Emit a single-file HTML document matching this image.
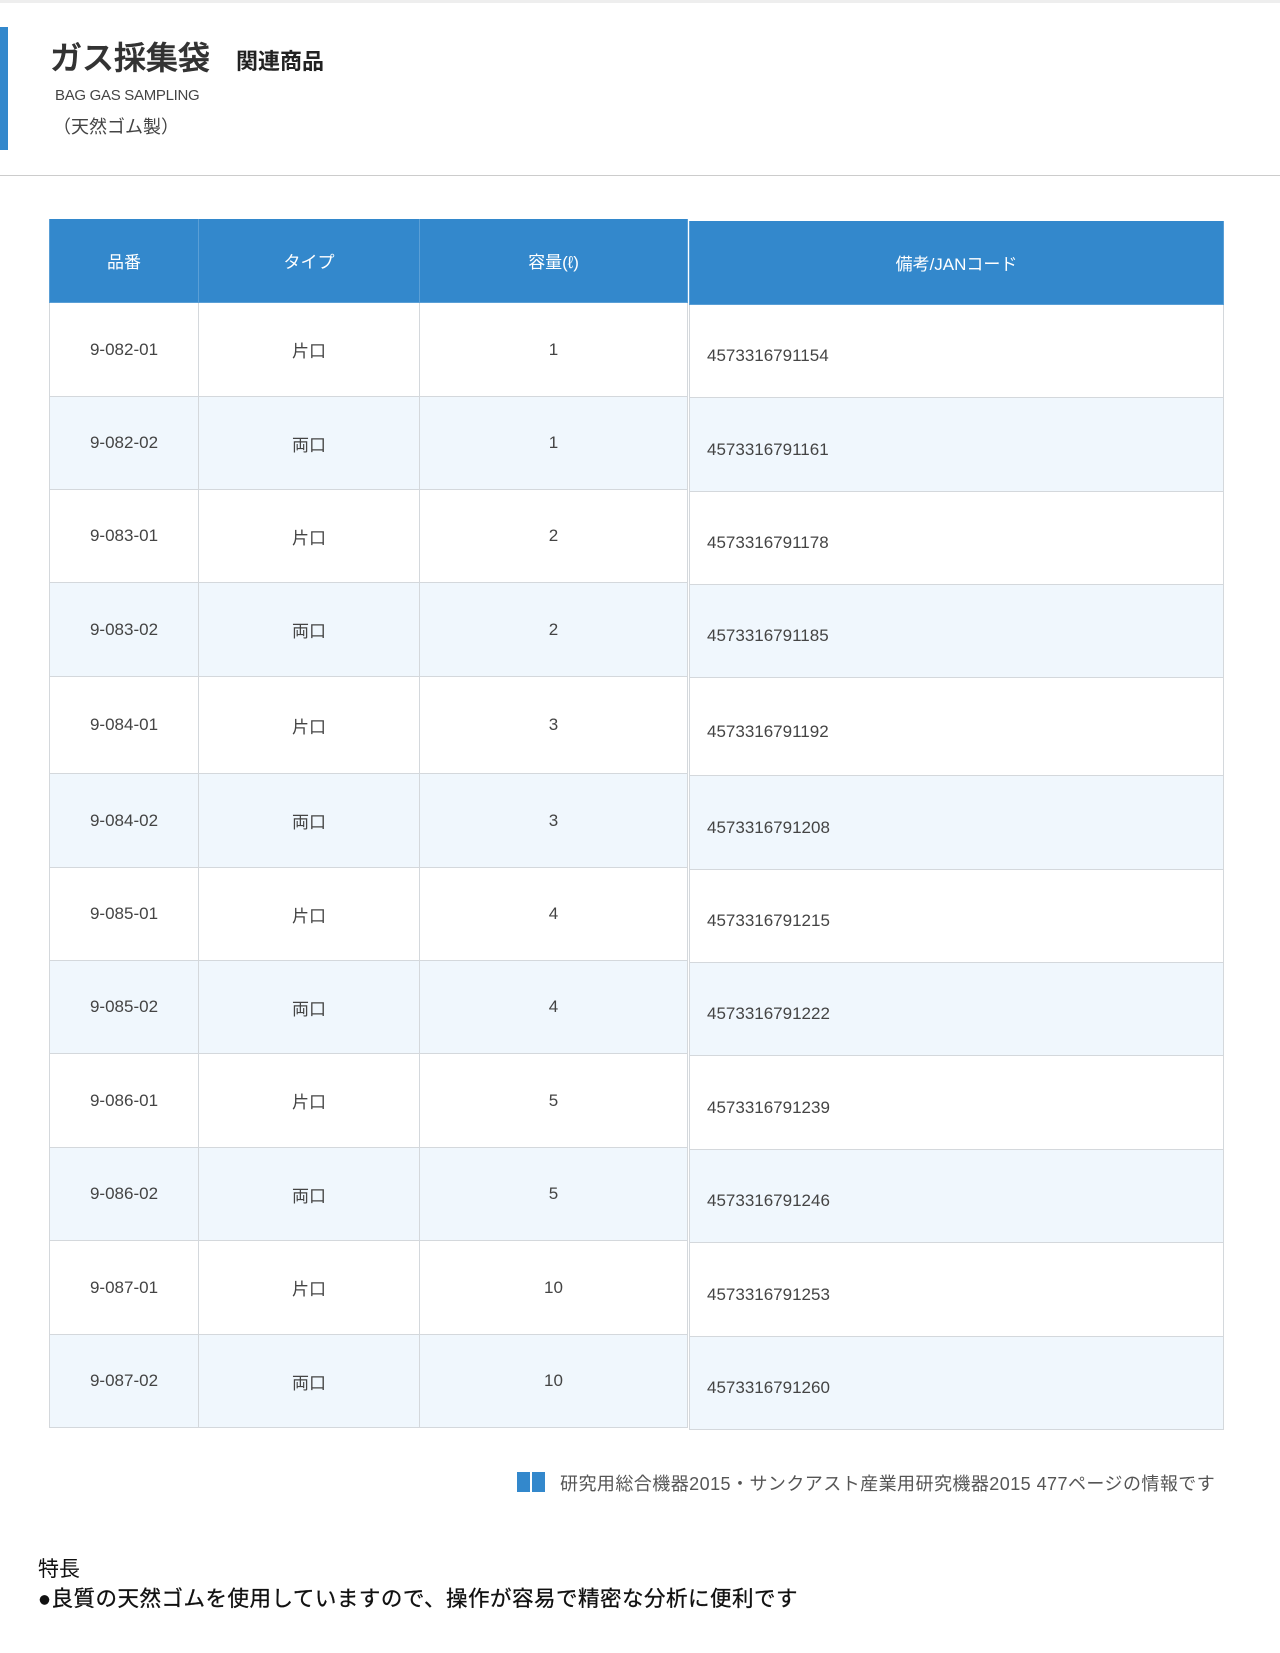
<!DOCTYPE html>
<html><head><meta charset="utf-8"><style>
*{margin:0;padding:0;box-sizing:border-box}
body{width:1280px;height:1653px;background:#fff;position:relative;font-family:"Liberation Sans","Noto Sans CJK JP",sans-serif;color:#333;overflow:hidden}
.a{position:absolute}
.c{position:absolute;display:flex;align-items:center;justify-content:center;font-size:17px;color:#444;border-right:1px solid #d4d8dc;border-bottom:1px solid #d4d8dc}
.h{background:#3388cc;color:#fff;border-color:#5a9fd6;font-size:17px}
</style></head><body>
<div class="a" style="left:0;top:0;width:1280px;height:3px;background:#eee"></div>
<div class="a" style="left:0;top:27px;width:8px;height:123px;background:#3388cc"></div>
<div class="a" style="left:50px;top:33px;font-size:32px;font-weight:500;color:#333;white-space:nowrap;-webkit-text-stroke:0.6px #333">ガス採集袋</div>
<div class="a" style="left:236px;top:44px;font-size:22px;font-weight:bold;color:#222;white-space:nowrap">関連商品</div>
<div class="a" style="left:55px;top:87px;font-size:15px;color:#444;letter-spacing:-0.3px">BAG GAS SAMPLING</div>
<div class="a" style="left:53px;top:113px;font-size:18px;color:#444">（天然ゴム製）</div>
<div class="a" style="left:0;top:175px;width:1280px;height:1px;background:#ccc"></div>

<div id="t"></div>
<div class="a" style="left:517px;top:1472px;width:13px;height:20px;background:#3388cc"></div>
<div class="a" style="left:532px;top:1472px;width:13px;height:20px;background:#3388cc"></div>
<div class="a" style="left:560px;top:1470px;font-size:18px;letter-spacing:0.45px;color:#555;white-space:nowrap">研究用総合機器2015・サンクアスト産業用研究機器2015 477ページの情報です</div>
<div class="a" style="left:38px;top:1553px;font-size:21px;color:#111">特長</div>
<div class="a" style="left:38px;top:1582px;font-size:21.5px;letter-spacing:0.5px;color:#111;white-space:nowrap;-webkit-text-stroke:0.3px #111">●良質の天然ゴムを使用していますので、操作が容易で精密な分析に便利です</div>
<script>
var L=[219,303,397,490,583,677,774,868,961,1054,1148,1241,1335,1428];
var R=[221,305,398,492,585,678,776,870,963,1056,1150,1243,1337,1430];
var rows=[["9-082-01","片口",1,"4573316791154"],["9-082-02","両口",1,"4573316791161"],["9-083-01","片口",2,"4573316791178"],["9-083-02","両口",2,"4573316791185"],["9-084-01","片口",3,"4573316791192"],["9-084-02","両口",3,"4573316791208"],["9-085-01","片口",4,"4573316791215"],["9-085-02","両口",4,"4573316791222"],["9-086-01","片口",5,"4573316791239"],["9-086-02","両口",5,"4573316791246"],["9-087-01","片口",10,"4573316791253"],["9-087-02","両口",10,"4573316791260"]];
var cx=[49,199,420,688],h="";
function cell(x,y,w,ht,txt,cls,bg,extra){return '<div class="c '+cls+'" style="left:'+x+'px;top:'+y+'px;width:'+w+'px;height:'+ht+'px;background:'+bg+';'+(extra||'')+'">'+txt+'</div>';}
var hd=["品番","タイプ","容量(ℓ)"];
for(var j=0;j<3;j++)h+=cell(cx[j],L[0],cx[j+1]-cx[j],L[1]-L[0],hd[j],"h","#3388cc",j==0?"border-left:1px solid #5a9fd6;":"");
h+=cell(689,R[0],535,R[1]-R[0],"備考/JANコード","h","#3388cc","border-left:1px solid #5a9fd6;");
for(var i=0;i<12;i++){var bg=i%2?"#f0f7fd":"#fff";
for(var j=0;j<3;j++)h+=cell(cx[j],L[i+1],cx[j+1]-cx[j],L[i+2]-L[i+1],rows[i][j],"",bg,j==0?"border-left:1px solid #d4d8dc;":"");
h+=cell(689,R[i+1],535,R[i+2]-R[i+1],rows[i][3],"",bg,"border-left:1px solid #d4d8dc;justify-content:flex-start;padding-left:17px;padding-top:10px;");}
document.getElementById("t").innerHTML=h;
</script>
</body></html>
